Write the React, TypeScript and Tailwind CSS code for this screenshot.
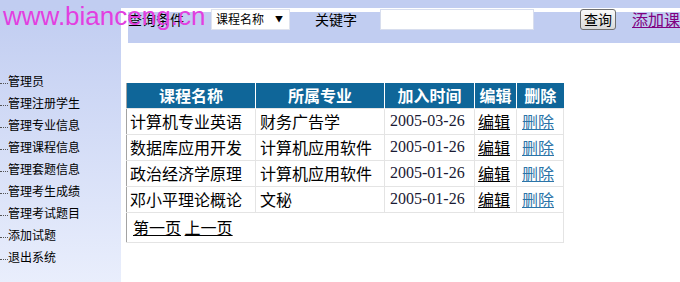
const MENU = [
  '管理员',
  '管理注册学生',
  '管理专业信息',
  '管理课程信息',
  '管理套题信息',
  '管理考生成绩',
  '管理考试题目',
  '添加试题',
  '退出系统',
]

const COURSES = [
  { name: '计算机专业英语', major: '财务广告学', date: '2005-03-26' },
  { name: '数据库应用开发', major: '计算机应用软件', date: '2005-01-26' },
  { name: '政治经济学原理', major: '计算机应用软件', date: '2005-01-26' },
  { name: '邓小平理论概论', major: '文秘', date: '2005-01-26' },
]

const cjk = "font-['Noto_Sans_CJK_SC',sans-serif]"

export default function App() {
  return (
    <div className={`relative w-[680px] h-[282px] overflow-hidden bg-white text-black ${cjk}`}>
      {/* top strip */}
      <div className="h-[8px] bg-[#c1cdf1]" />

      <div className="flex">
        {/* ── Sidebar ── */}
        <div className="w-[121px] h-[274px] shrink-0 bg-gradient-to-b from-[#c1cdf1] to-[#e9eefc] pt-[62px]">
          {MENU.map((item) => (
            <div key={item} className="flex items-center h-[22px] text-[12px] leading-[22px] whitespace-nowrap">
              <span className="inline-block w-[8px] mt-[5px] border-t border-dotted border-[#555]" />
              <span>{item}</span>
            </div>
          ))}
        </div>

        {/* ── Main ── */}
        <div className="flex-1 min-w-0 overflow-hidden">
          {/* search bar */}
          <div className="ml-[7px] h-[35px] bg-[linear-gradient(to_bottom,#ffffff_4px,#c1cdf1_4px)]">
            <div className="flex items-center h-[22px] text-[14px] whitespace-nowrap">
              <span className="shrink-0 leading-[22px]">查询条件</span>
              <div className="shrink-0 ml-[27px] w-[79px] h-[21px] bg-white border border-[#dfe3ee] flex items-center justify-between pl-[4px] pr-[6px] text-[12px]">
                <span>课程名称</span>
                <span className="text-[8px]">▼</span>
              </div>
              <span className="shrink-0 ml-[25px] leading-[22px]">关键字</span>
              <div className="shrink-0 ml-[23px] w-[154px] h-[21px] bg-white border border-[#d8deee]" />
              <button className="shrink-0 ml-[46px] w-[36px] h-[21px] rounded-[3px] border border-[#6f6f6f] bg-gradient-to-b from-[#fafafa] to-[#d9d9d9] text-[14px] leading-[18px]">
                查询
              </button>
              <a className="shrink-0 ml-[16px] text-[16px] text-[#800080] underline">添加课程</a>
            </div>
          </div>

          {/* course table */}
          <table className="ml-[5px] mt-[40px] border-collapse text-[16px] border-l border-[#a3a3a3]">
            <thead>
              <tr className="h-[25px] bg-[#0f6699] text-white">
                <th className="w-[129px] p-0 border-r border-white font-bold">课程名称</th>
                <th className="w-[129px] p-0 border-r border-white font-bold">所属专业</th>
                <th className="w-[90px] p-0 border-r border-white font-bold">加入时间</th>
                <th className="w-[42px] p-0 border-r border-white font-bold">编辑</th>
                <th className="w-[47px] p-0 font-bold">删除</th>
              </tr>
            </thead>
            <tbody>
              {COURSES.map((c) => (
                <tr key={c.name} className="h-[26px]">
                  <td className="pl-[3px] border border-[#e4e4e4] border-l-0 leading-[24px]">{c.name}</td>
                  <td className="pl-[4px] border border-[#e4e4e4] leading-[24px]">{c.major}</td>
                  <td className="pl-[5px] border border-[#e4e4e4] leading-[24px] text-[#1a1a33] font-['Liberation_Serif',serif]">
                    {c.date}
                  </td>
                  <td className="pl-[3px] border border-[#e4e4e4] leading-[24px] font-normal">
                    <a className="underline text-black">编辑</a>
                  </td>
                  <td className="pl-[5px] border border-[#e4e4e4] leading-[24px]">
                    <a className="underline text-[#2b74a8]">删除</a>
                  </td>
                </tr>
              ))}
              <tr className="h-[30px]">
                <td colSpan={5} className="pl-[6px] border border-[#e4e4e4] border-l-0 leading-[24px]">
                  <a className="underline">第一页</a> <a className="underline">上一页</a>
                </td>
              </tr>
            </tbody>
          </table>
        </div>
      </div>

      {/* watermark */}
      <div className="absolute left-[3px] top-[3px] text-[26px] leading-none text-[#e23fe0] font-['Liberation_Sans',Arial,sans-serif] pointer-events-none">
        www.bianceng.cn
      </div>
    </div>
  )
}
